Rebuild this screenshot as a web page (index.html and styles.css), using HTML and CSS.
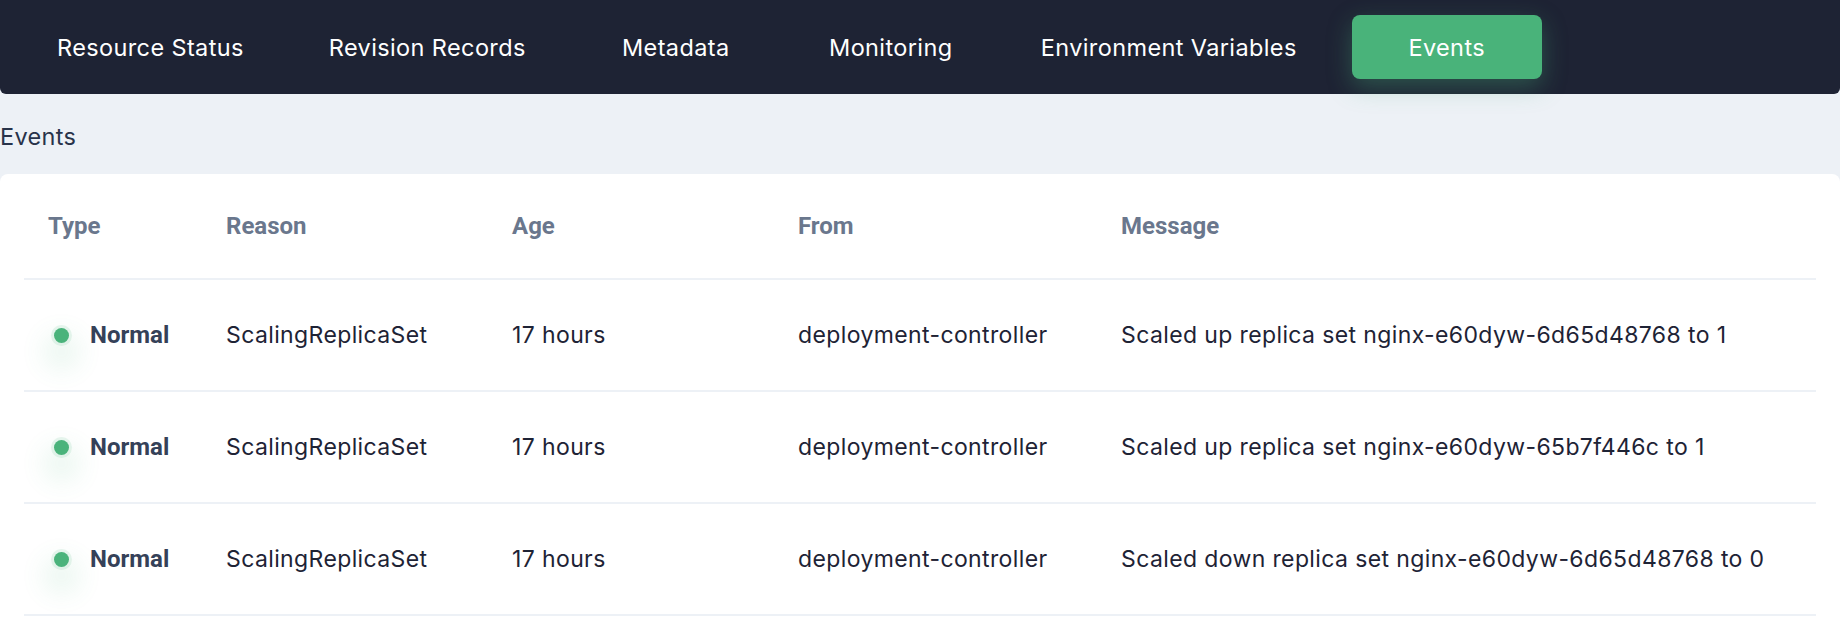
FILE: index.html
```html
<!DOCTYPE html>
<html lang="en">
<head>
<meta charset="utf-8">
<title>Events</title>
<link rel="stylesheet" href="styles.css">
</head>
<body>
<nav class="nav">
  <a class="tab">Resource Status</a>
  <a class="tab">Revision Records</a>
  <a class="tab">Metadata</a>
  <a class="tab">Monitoring</a>
  <a class="tab">Environment Variables</a>
  <a class="tab active">Events</a>
</nav>
<h2 class="title">Events</h2>
<section class="card">
  <div class="row head">
    <div class="cell">Type</div>
    <div class="cell">Reason</div>
    <div class="cell">Age</div>
    <div class="cell">From</div>
    <div class="cell">Message</div>
  </div>
  <div class="row">
    <div class="cell type"><span class="dot"></span><span class="type-name">Normal</span></div>
    <div class="cell">ScalingReplicaSet</div>
    <div class="cell">17 hours</div>
    <div class="cell">deployment-controller</div>
    <div class="cell">Scaled up replica set nginx-e60dyw-6d65d48768 to 1</div>
  </div>
  <div class="row">
    <div class="cell type"><span class="dot"></span><span class="type-name">Normal</span></div>
    <div class="cell">ScalingReplicaSet</div>
    <div class="cell">17 hours</div>
    <div class="cell">deployment-controller</div>
    <div class="cell">Scaled up replica set nginx-e60dyw-65b7f446c to 1</div>
  </div>
  <div class="row">
    <div class="cell type"><span class="dot"></span><span class="type-name">Normal</span></div>
    <div class="cell">ScalingReplicaSet</div>
    <div class="cell">17 hours</div>
    <div class="cell">deployment-controller</div>
    <div class="cell">Scaled down replica set nginx-e60dyw-6d65d48768 to 0</div>
  </div>
</section>
</body>
</html>
```
FILE: styles.css
```css
html, body {
  margin: 0;
  padding: 0;
}
body {
  background: #edf1f6;
  font-family: Inter, "Liberation Sans", sans-serif;
  color: #1e2335;
  overflow: hidden;
}
.nav {
  display: flex;
  align-items: center;
  gap: 25px;
  height: 94px;
  padding-left: 27px;
  background: #1e2334;
  border-radius: 0 0 6px 6px;
}
.tab {
  box-sizing: border-box;
  min-width: 190px;
  height: 64px;
  padding: 0 30px;
  display: flex;
  align-items: center;
  justify-content: center;
  color: #ffffff;
  font-size: 23.5px;
  letter-spacing: 0.38px;
  border-radius: 8px;
  white-space: nowrap;
}
.tab.active {
  background: #49b37a;
  box-shadow: 0 8px 24px rgba(74, 179, 123, 0.34);
}
.title {
  box-sizing: border-box;
  height: 80px;
  margin: 0;
  padding-top: 28px;
  font-size: 23.5px;
  font-weight: 400;
  letter-spacing: 0.3px;
  line-height: 30px;
  color: #28334a;
}
.card {
  background: #ffffff;
  border-radius: 8px 8px 0 0;
  padding: 0 24px 12px;
}
.row {
  box-sizing: border-box;
  display: grid;
  grid-template-columns: 178px 286px 286px 323px 1fr;
  align-items: center;
  height: 112px;
  border-bottom: 2px solid #edf1f6;
  font-size: 23px;
  letter-spacing: 0.38px;
}
.row.head {
  height: 106px;
  font-family: Roboto, "Liberation Sans", sans-serif;
  font-weight: 700;
  font-size: 24px;
  letter-spacing: 0;
  color: #6a778d;
}
.cell {
  padding-left: 24px;
  white-space: nowrap;
}
.type {
  display: flex;
  align-items: center;
}
.dot {
  width: 15px;
  height: 15px;
  margin-left: 6px;
  margin-right: 21px;
  border-radius: 50%;
  background: #4ab37b;
  box-shadow: 0 0 0 3px rgba(74, 179, 123, 0.12), 0 16px 26px 10px rgba(74, 179, 123, 0.12);
}
.type-name {
  font-family: Roboto, "Liberation Sans", sans-serif;
  font-weight: 700;
  font-size: 24px;
  letter-spacing: 0;
  color: #354158;
}
```
